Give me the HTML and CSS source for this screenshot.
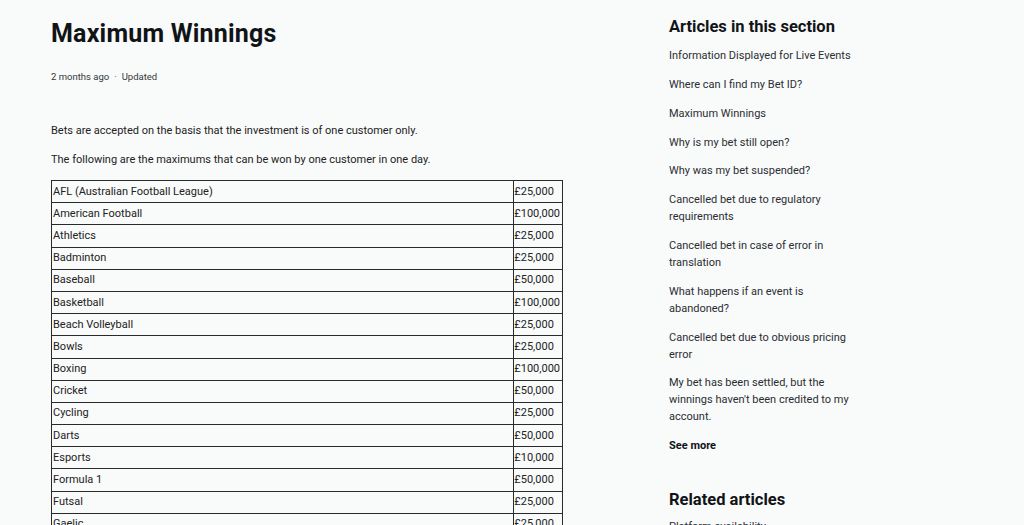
FILE: index.html
```html
<!DOCTYPE html>
<html lang="en">
<head>
<meta charset="utf-8">
<title>Maximum Winnings</title>
<link rel="stylesheet" href="styles.css">
</head>
<body>
<div class="page">
  <main class="article">
    <h1 class="title">Maximum Winnings</h1>
    <div class="meta"><span>2 months ago</span><span class="dot">·</span><span>Updated</span></div>
    <div class="body">
      <p>Bets are accepted on the basis that the investment is of one customer only.</p>
      <p>The following are the maximums that can be won by one customer in one day.</p>
      <table class="limits">
        <tbody>
          <tr><td>AFL (Australian Football League)</td><td>£25,000</td></tr>
          <tr><td>American Football</td><td>£100,000</td></tr>
          <tr><td>Athletics</td><td>£25,000</td></tr>
          <tr><td>Badminton</td><td>£25,000</td></tr>
          <tr><td>Baseball</td><td>£50,000</td></tr>
          <tr><td>Basketball</td><td>£100,000</td></tr>
          <tr><td>Beach Volleyball</td><td>£25,000</td></tr>
          <tr><td>Bowls</td><td>£25,000</td></tr>
          <tr><td>Boxing</td><td>£100,000</td></tr>
          <tr><td>Cricket</td><td>£50,000</td></tr>
          <tr><td>Cycling</td><td>£25,000</td></tr>
          <tr><td>Darts</td><td>£50,000</td></tr>
          <tr><td>Esports</td><td>£10,000</td></tr>
          <tr><td>Formula 1</td><td>£50,000</td></tr>
          <tr><td>Futsal</td><td>£25,000</td></tr>
          <tr><td>Gaelic</td><td>£25,000</td></tr>
        </tbody>
      </table>
    </div>
  </main>
  <aside class="sidebar">
    <h2 class="side-title">Articles in this section</h2>
    <ul class="side-list">
      <li><a href="#">Information Displayed for Live Events</a></li>
      <li><a href="#">Where can I find my Bet ID?</a></li>
      <li><a href="#">Maximum Winnings</a></li>
      <li><a href="#">Why is my bet still open?</a></li>
      <li><a href="#">Why was my bet suspended?</a></li>
      <li><a href="#">Cancelled bet due to regulatory requirements</a></li>
      <li><a href="#">Cancelled bet in case of error in translation</a></li>
      <li><a href="#">What happens if an event is abandoned?</a></li>
      <li><a href="#">Cancelled bet due to obvious pricing error</a></li>
      <li><a href="#">My bet has been settled, but the winnings haven't been credited to my account.</a></li>
    </ul>
    <a class="see-more" href="#">See more</a>
    <h2 class="side-title related">Related articles</h2>
    <ul class="side-list related-list">
      <li><a href="#">Platform availability</a></li>
    </ul>
  </aside>
</div>
</body>
</html>
```

FILE: styles.css
```css
html, body {
  margin: 0;
  padding: 0;
}
body {
  background: #f9fafa;
  color: #1f2328;
  font-family: "Roboto", "Liberation Sans", sans-serif;
  font-size: 11px;
  overflow: hidden;
}
a {
  color: inherit;
  text-decoration: none;
}
.page {
  display: flex;
  padding: 0 0 0 51px;
  gap: 106px;
}
.article {
  width: 512px;
  flex: none;
}
.title {
  margin: 18px 0 0;
  font-size: 25px;
  font-weight: 700;
  line-height: 32px;
  letter-spacing: 0.2px;
  color: #111417;
}
.meta {
  margin-top: 21px;
  font-size: 9.5px;
  line-height: 12px;
  color: #33383d;
  display: flex;
  gap: 5px;
}
.body {
  margin-top: 39px;
}
.body p {
  margin: 0 0 12px;
  line-height: 17px;
  color: #222;
}
.limits {
  border-collapse: collapse;
  width: 512px;
  margin-top: 1px;
}
.limits td {
  border: 1px solid #2a2a2a;
  padding: 0 2px 0 1px;
  height: 21.2px;
  line-height: 14px;
  color: #222;
  white-space: nowrap;
}
.limits td:last-child {
  padding-left: 0;
}
.limits td:first-child {
  width: 100%;
}
.sidebar {
  width: 192px;
  flex: none;
}
.side-title {
  margin: 17px 0 0;
  font-size: 16.5px;
  font-weight: 700;
  line-height: 20px;
  color: #111417;
}
.side-list {
  list-style: none;
  margin: 0;
  padding: 0;
}
.side-list li {
  margin-top: 11.8px;
  line-height: 17px;
  color: #2a2e33;
}
.sidebar > .side-list:first-of-type li:first-child {
  margin-top: 10.2px;
}
.related-list li:first-child {
  margin-top: 8px;
}
.see-more {
  display: block;
  margin-top: 12px;
  line-height: 17px;
  font-weight: 700;
  color: #111417;
}
.related {
  margin-top: 36px;
}
```
